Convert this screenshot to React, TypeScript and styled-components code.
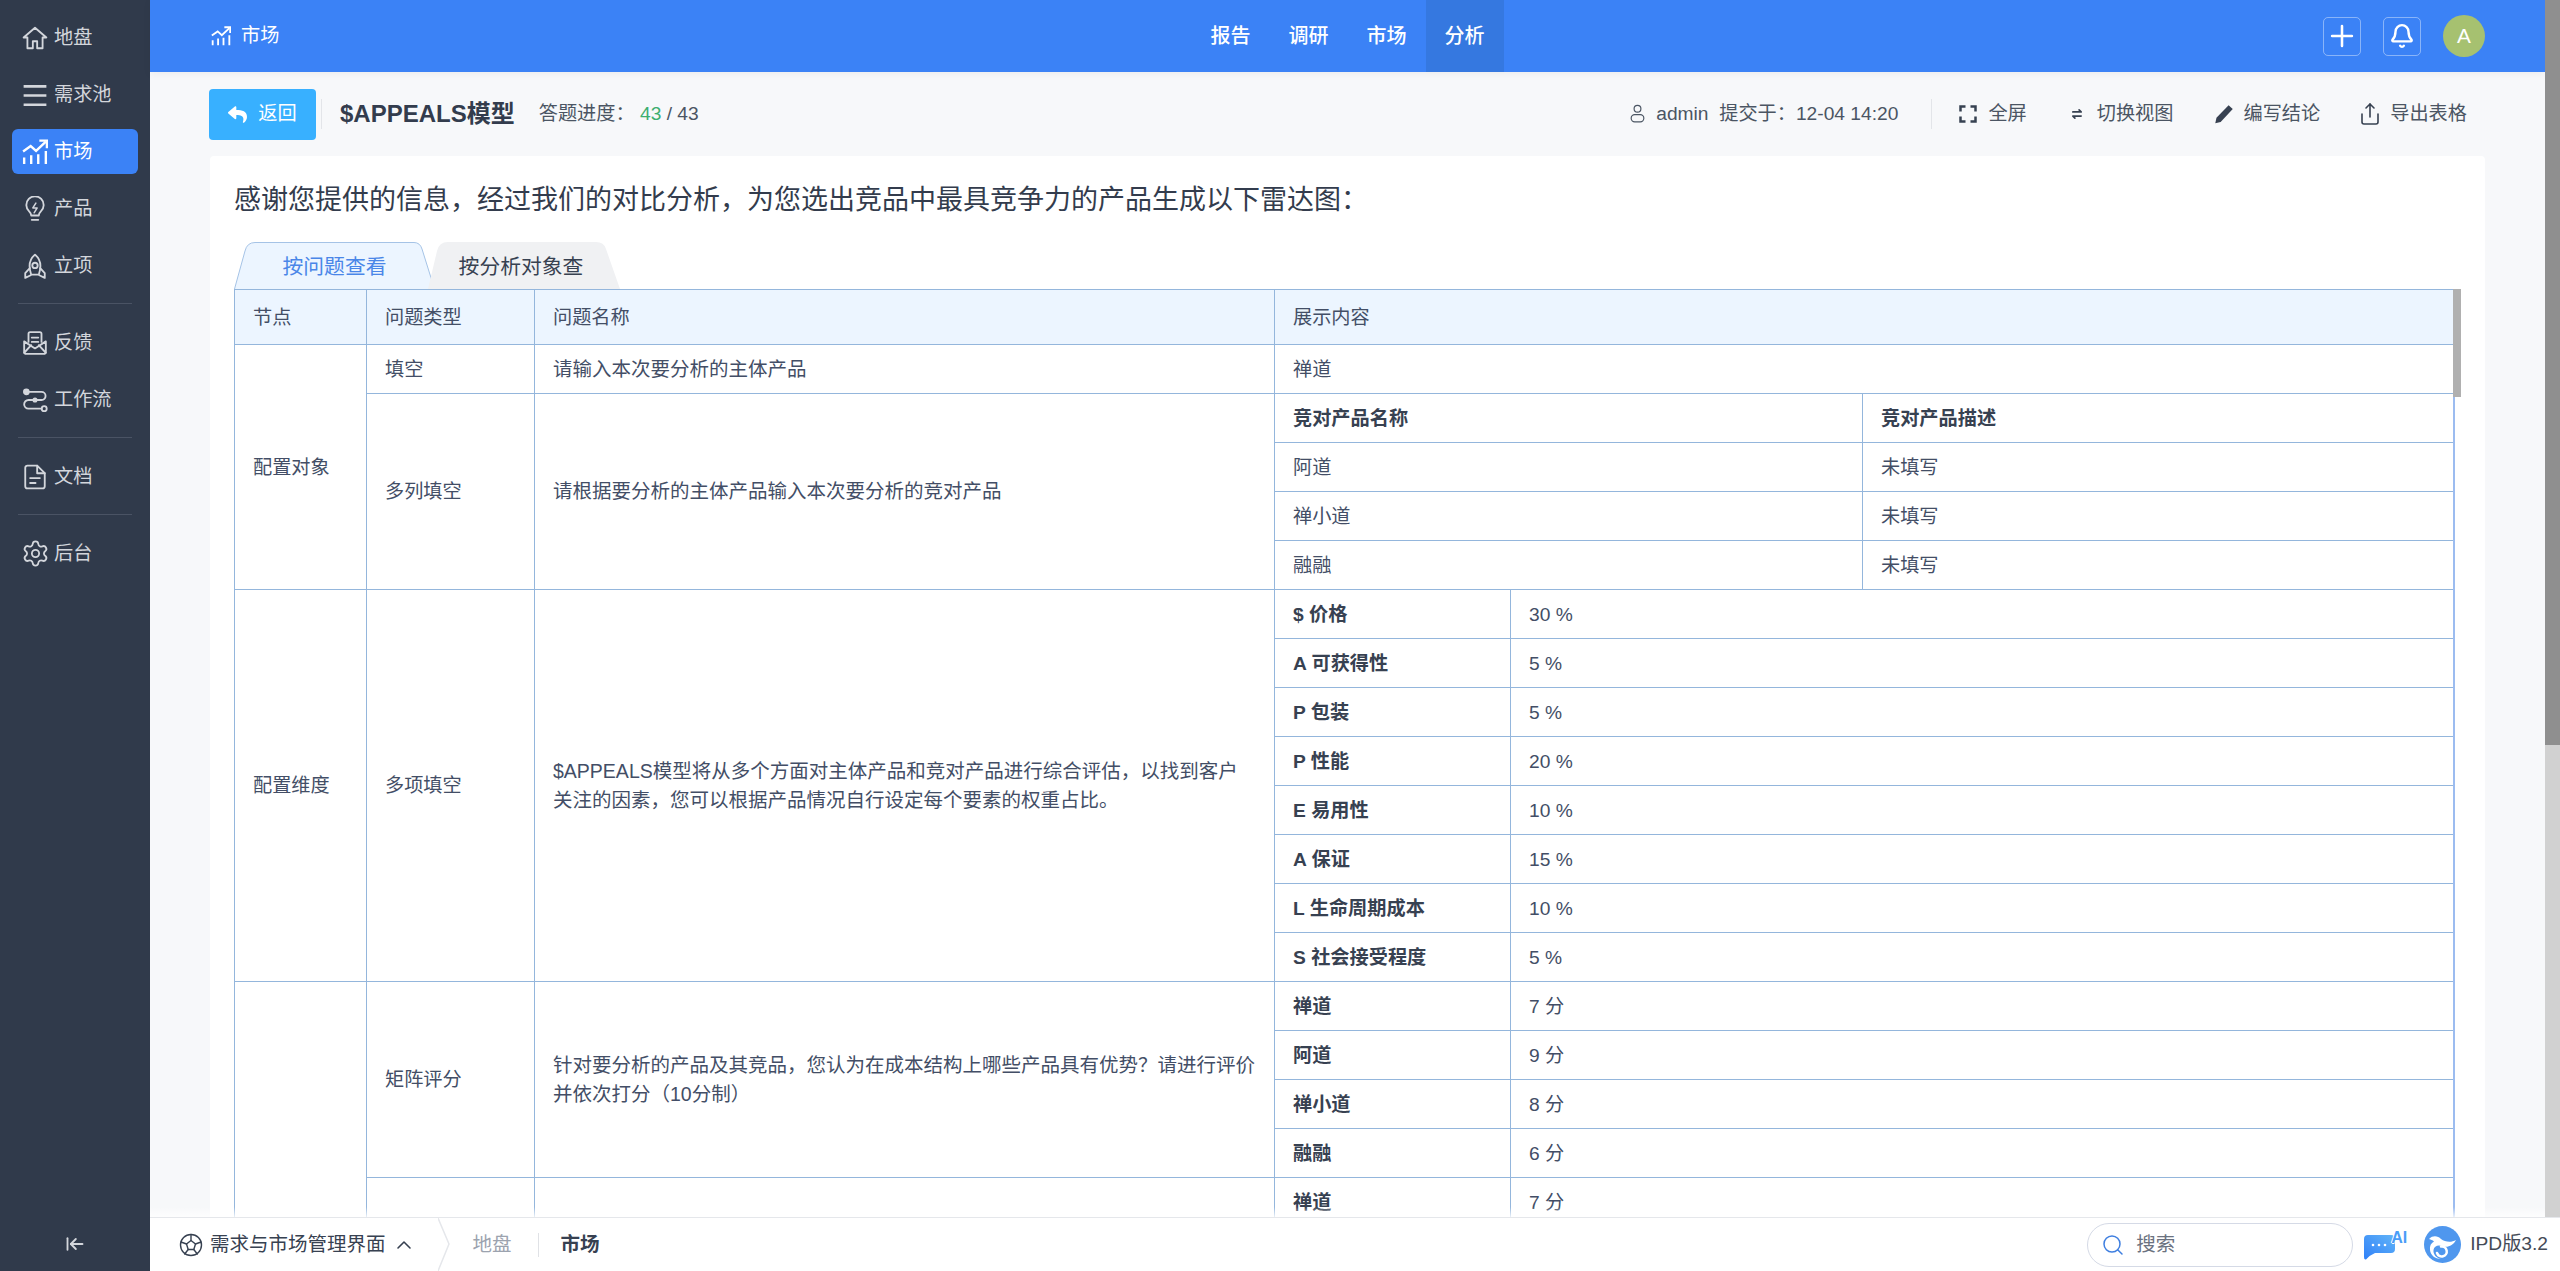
import React from 'react'
import styled, { createGlobalStyle } from 'styled-components'
import { ArrowLeftToLine, Bell, ChevronUp, Plus, Search, Settings, Share } from 'lucide-react'
import { FaReply } from 'react-icons/fa'

const GlobalStyle = createGlobalStyle`
  html, body {
    margin: 0;
    height: 100%;
    overflow: hidden;
  }
  body {
    font-family: "Liberation Sans", "Noto Sans CJK SC", sans-serif;
    font-size: 19.2px;
    line-height: 1.5;
    color: #374151;
  }
  #root {
    height: 100%;
  }
`

const Page = styled.div`
  display: flex;
  height: 100vh;
  background: #fff;
`

// 왼쪽 메뉴
const Sidebar = styled.aside`
  width: 150px;
  flex: none;
  display: flex;
  flex-direction: column;
  background: #303a4b;
  padding: 15px 12px 0;
  box-sizing: border-box;
`

const MenuItem = styled.a<{ $active?: boolean }>`
  display: flex;
  align-items: center;
  gap: 6px;
  height: 45px;
  flex: none;
  margin-bottom: 12px;
  padding: 2px 0 0 10px;
  box-sizing: border-box;
  border-radius: 6px;
  font-size: 19.2px;
  color: ${(p) => (p.$active ? '#fff' : '#d3d6dc')};
  background: ${(p) => (p.$active ? '#3b82f6' : 'transparent')};

  & > svg {
    width: 26px;
    height: 26px;
    flex: none;
    margin-top: -2px;
  }
`

const GearIcon = styled(Settings)`
  && {
    width: 29px;
    height: 29px;
    margin: -2px -1.5px 0;
  }
`

const MenuDivider = styled.div`
  height: 1px;
  flex: none;
  margin: 3px 6px 16px;
  background: #4a5364;
`

const Collapse = styled.button`
  margin-top: auto;
  height: 54px;
  border: 0;
  padding: 0;
  background: none;
  color: #d3d6dc;
  display: flex;
  align-items: center;
  justify-content: center;

  & > svg {
    width: 20px;
    height: 20px;
  }
`

const Right = styled.div`
  flex: 1;
  min-width: 0;
  display: flex;
  flex-direction: column;
`

const Viewport = styled.div`
  flex: 1;
  min-height: 0;
  display: flex;
`

const Scroller = styled.div`
  flex: 1;
  min-width: 0;
  display: flex;
  flex-direction: column;
  background: #f7f8fa;
`

const ScrollTrack = styled.div`
  width: 15px;
  flex: none;
  background: #d1d1d1;
`

const ScrollThumb = styled.div`
  height: 745px;
  background: #8f8f8f;
`

// 상단 바
const TopBar = styled.header`
  height: 72px;
  flex: none;
  display: grid;
  grid-template-columns: 1fr auto 1fr;
  align-items: stretch;
  background: #3b82f6;
  color: #fff;
  box-shadow: 0 2px 8px rgba(0, 0, 0, 0.05);
`

const TopTitle = styled.div`
  display: flex;
  align-items: center;
  gap: 10px;
  padding-left: 61px;
  font-size: 19.2px;

  & > svg {
    width: 20px;
    height: 20px;
  }
`

const Nav = styled.nav`
  display: flex;
`

const NavItem = styled.a<{ $active?: boolean }>`
  width: 78px;
  display: flex;
  align-items: center;
  justify-content: center;
  font-size: 20px;
  font-weight: 500;
  background: ${(p) => (p.$active ? '#3578e0' : 'transparent')};
`

const TopActions = styled.div`
  display: flex;
  align-items: center;
  justify-content: flex-end;
  gap: 22px;
  padding-right: 60px;
`

const SquareButton = styled.button`
  width: 38px;
  height: 39px;
  padding: 0;
  display: flex;
  align-items: center;
  justify-content: center;
  color: #fff;
  background: transparent;
  border: 1px solid rgba(255, 255, 255, 0.4);
  border-radius: 5px;

  & > svg {
    flex: none;
  }
`

const Avatar = styled.div`
  width: 42px;
  height: 42px;
  border-radius: 50%;
  background: #a6c170;
  display: flex;
  align-items: center;
  justify-content: center;
  font-size: 20.8px;
`

// 제목 줄
const ToolBar = styled.div`
  height: 84px;
  flex: none;
  display: flex;
  align-items: center;
  justify-content: space-between;
  padding: 0 78px 0 59px;
`

const ToolLeft = styled.div`
  display: flex;
  align-items: center;
`

const BackButton = styled.button`
  width: 107px;
  height: 51px;
  padding: 0;
  border: 0;
  border-radius: 4px;
  background: #38b0ff;
  color: #fff;
  font: inherit;
  display: flex;
  align-items: center;
  justify-content: center;
  gap: 11px;
  margin-right: 5px;

  & > svg {
    width: 19px;
    height: 19px;
  }
`

const VSep = styled.span`
  width: 1px;
  height: 30px;
  background: #e3e5e9;
`

const Title = styled.h1`
  margin: 0 24px 0 18px;
  font-size: 24px;
  font-weight: 700;
  color: #333c4d;
`

const Progress = styled.div`
  color: #4b5563;
`

const Done = styled.span`
  color: #3dae6f;
`

const ToolRight = styled.div`
  display: flex;
  align-items: center;
  color: #4b5563;
`

const Submitter = styled.div`
  display: flex;
  align-items: center;
  gap: 9px;
  margin-right: 33px;

  & > svg {
    width: 19px;
    height: 19px;
  }
`

const ToolAction = styled.a`
  display: flex;
  align-items: center;
  gap: 10px;
  margin-left: 40px;

  &:first-of-type {
    margin-left: 26px;
  }

  & > svg {
    width: 20px;
    height: 20px;
    flex: none;
    color: #374151;
  }
`

const ShareIcon = styled(Share)`
  && {
    width: 24px;
    height: 24px;
    margin: 0 -2px;
  }
`

// 본문 카드
const Card = styled.main`
  flex: 1;
  min-height: 0;
  margin: 0 60px;
  padding: 0 24px;
  background: #fff;
  border-radius: 4px 4px 0 0;
  display: flex;
  flex-direction: column;
  overflow: hidden;
`

const Lead = styled.p`
  margin: 0;
  height: 86px;
  flex: none;
  box-sizing: border-box;
  padding-top: 3px;
  display: flex;
  align-items: center;
  font-size: 27px;
  color: #333c4d;
`

const Tabs = styled.div`
  display: flex;
  height: 47px;
  flex: none;
`

const Tab = styled.a<{ $active?: boolean }>`
  position: relative;
  display: flex;
  align-items: center;
  justify-content: center;
  height: 47px;
  font-size: 20.8px;
  width: ${(p) => (p.$active ? '201px' : '192px')};
  margin-left: ${(p) => (p.$active ? '0' : '-7px')};
  padding: ${(p) => (p.$active ? '2px 0 0' : '2px 6px 0 0')};
  box-sizing: border-box;
  color: ${(p) => (p.$active ? '#4a86e8' : '#374151')};

  & > svg {
    position: absolute;
    inset: 0;
    width: 100%;
    height: 100%;
  }

  & > span {
    position: relative;
  }
`

const TableBox = styled.div`
  flex: 1;
  min-height: 0;
  overflow: hidden;
  position: relative;
  padding-right: 8px;
`

const TableThumb = styled.div`
  position: absolute;
  z-index: 1;
  top: 0;
  right: 0;
  width: 8px;
  height: 108px;
  background: #b0b0b0;
`

const Sheet = styled.table`
  width: 2219px;
  border-collapse: collapse;
  border-right: 2px solid #9cbcf0;
  table-layout: fixed;
  color: #434e66;
  font-size: 19.2px;
  line-height: 29px;
`

const Row = styled.tr<{ $head?: boolean }>`
  height: ${(p) => (p.$head ? '55px' : '49px')};
  background: ${(p) => (p.$head ? '#ecf5ff' : 'transparent')};
`

const Cell = styled.td<{ $bold?: boolean }>`
  box-sizing: border-box;
  padding: 0 18px;
  border: 1px solid #94b6dc;
  font-weight: ${(p) => (p.$bold ? 700 : 400)};
  color: ${(p) => (p.$bold ? '#374151' : 'inherit')};
`

const NameCell = styled(Cell)`
  font-size: 19.5px;
`

// 하단 바
const Footer = styled.footer`
  height: 54px;
  flex: none;
  box-sizing: border-box;
  border-top: 1px solid #e5e7eb;
  background: #fff;
  display: flex;
  align-items: center;
  position: relative;
  padding-left: 29px;
  padding-right: 12px;
  font-size: 19.5px;

  &::before {
    content: '';
    position: absolute;
    left: 0;
    right: 15px;
    top: -11px;
    height: 10px;
    background: linear-gradient(rgba(255, 255, 255, 0), rgba(255, 255, 255, 0.8));
  }
`

const System = styled.div`
  display: flex;
  align-items: center;
  gap: 7px;
  color: #374151;

  & > svg {
    width: 24px;
    height: 24px;
    flex: none;
  }
  & > svg:last-child {
    margin-left: -1px;
  }
`

const Crumbs = styled.div`
  display: flex;
  align-items: center;
  margin-left: 22px;
  height: 100%;
`

const Chevron = styled.svg`
  width: 12px;
  height: 53px;
  flex: none;
  margin-right: 23px;
`

const Crumb = styled.span<{ $current?: boolean }>`
  font-weight: ${(p) => (p.$current ? 700 : 400)};
  color: ${(p) => (p.$current ? '#374151' : '#9ca3af')};
`

const CrumbSep = styled.span`
  width: 1px;
  height: 24px;
  margin: 0 22px 0 26px;
  background: #e0e2e6;
`

const FooterRight = styled.div`
  margin-left: auto;
  display: flex;
  align-items: center;
`

const SearchBox = styled.div`
  width: 266px;
  height: 44px;
  box-sizing: border-box;
  border: 1.5px solid #d5dae6;
  border-radius: 22px;
  display: flex;
  align-items: center;
  gap: 11px;
  padding-left: 13px;
  color: #6b7280;

  & > svg {
    width: 24px;
    height: 24px;
    color: #3f7fe0;
  }
`

const AiBadge = styled.div`
  position: relative;
  width: 43px;
  height: 32px;
  margin-left: 11px;

  & > svg {
    position: absolute;
    left: 0;
    bottom: 1px;
    width: 31px;
    height: 25px;
  }
`

const AiText = styled.span`
  position: absolute;
  top: -3px;
  right: 0;
  font-size: 16px;
  font-weight: 700;
  color: #4a9df8;
  text-shadow: -1px 0 0 #fff, 0 1px 0 #fff;
`

const Logo = styled.svg`
  width: 37px;
  height: 37px;
  margin: 0 9px 0 17px;
`

const Version = styled.span`
  font-size: 19.2px;
  color: #444b57;
  white-space: nowrap;
`

const Ic = (props: React.SVGProps<SVGSVGElement>) => (
  <svg viewBox="0 0 24 24" fill="none" stroke="currentColor" strokeWidth="1.7" strokeLinecap="round" strokeLinejoin="round" {...props} />
)

const HomeIcon = () => (
  <Ic>
    <path d="M1.500 11.500 12 2.500l10.500 9H19V21.500h-5v-6.500h-4v6.500H5V11.500Z" />
  </Ic>
)
const ListIcon = () => (
  <Ic strokeWidth="2.400" strokeLinecap="butt">
    <path d="M1.500 4h21M1.500 12.500h21M1.500 21h21" />
  </Ic>
)
const MarketIcon = () => (
  <Ic strokeWidth="2.200" strokeLinecap="butt" strokeLinejoin="miter">
    <path d="M2 23v-6M8.500 23v-8M15 23v-9M22 23V11" />
    <path d="M1 11.500 8 6.500l5 4.500 9-8.500" />
    <path d="M16 1.500h7v7" />
  </Ic>
)
const BulbIcon = () => (
  <Ic>
    <path d="M8.500 18c0-1.500-.8-2.700-1.900-3.800A8 8 0 1 1 17.400 14.200c-1.100 1.100-1.900 2.300-1.900 3.800Z" />
    <path d="M9 22h6" />
    <path d="M12.800 6.500 10 11h4l-2.800 4.500" strokeWidth="1.400" />
  </Ic>
)
const RocketIcon = () => (
  <Ic>
    <path d="M12 1.500c3.500 3 5 6.500 5 10.500 0 3-.7 5.500-1.500 8h-7C7.700 17.500 7 15 7 12c0-4 1.500-7.500 5-10.500Z" />
    <circle cx="12" cy="11.500" r="2.500" />
    <path d="M7.200 14 3 18.500V23l5-2.500M16.800 14l4.200 4.500V23l-5-2.500" />
  </Ic>
)
const FeedbackIcon = () => (
  <Ic>
    <path d="M6 11V3.500A1.500 1.500 0 0 1 7.500 2h9A1.500 1.500 0 0 1 18 3.500V11" />
    <path d="M9 7h6M9 11h6" />
    <path d="M2 10.500V20a2 2 0 0 0 2 2h16a2 2 0 0 0 2-2v-9.500L12 17Z" />
    <path d="m2 21 6.500-7M22 21l-6.500-7" />
  </Ic>
)
const FlowIcon = () => (
  <Ic>
    <circle cx="4" cy="4.500" r="2.200" fill="currentColor" />
    <path d="M6 4.500h12a3.500 3.500 0 0 1 0 7.500H6a4 4 0 0 0 0 8h12" />
    <circle cx="20.500" cy="20" r="2.300" />
    <circle cx="12" cy="12" r="1.500" fill="currentColor" />
  </Ic>
)
const DocIcon = () => (
  <Ic>
    <path d="M14 1.500H5a2 2 0 0 0-2 2v17a2 2 0 0 0 2 2h14a2 2 0 0 0 2-2V8.500Z" />
    <path d="M14 1.500V8.500h7M7.500 13h9M7.500 17.500h5" />
  </Ic>
)
const UserIcon = () => (
  <Ic strokeWidth="1.500">
    <circle cx="12" cy="6" r="4.300" />
    <rect x="4" y="13.500" width="16" height="9" rx="4.500" />
  </Ic>
)
const FullIcon = () => (
  <Ic strokeWidth="3" strokeLinecap="butt" strokeLinejoin="miter">
    <path d="M3 9V3h6M15 3h6v6M21 15v6h-6M9 21H3v-6" />
  </Ic>
)
const SwapIcon = () => (
  <Ic strokeWidth="2">
    <path d="M7 9.500h10l-2.500-2.500M17 14.500H7l2.500 2.500" />
  </Ic>
)
const PenIcon = () => (
  <svg viewBox="0 0 24 24" fill="currentColor">
    <path d="M17.500 1.500 22.500 6 8 21.500 1.500 23 3 16.500Z" />
  </svg>
)
const WheelIcon = () => (
  <Ic strokeWidth="1.400">
    <circle cx="12" cy="12" r="10.500" />
    <path d="M12 7.500 16.500 11l-1.700 5.500H9.200L7.500 11Z" />
    <path d="M12 7.500V1.500M16.500 11 22 9M14.800 16.500l3.500 4.500M9.200 16.500 5.700 21M7.500 11 2 9" />
  </Ic>
)

type RowData = { label: string; value: string }

const dimensions: RowData[] = [
  { label: '$ 价格', value: '30 %' },
  { label: 'A 可获得性', value: '5 %' },
  { label: 'P 包装', value: '5 %' },
  { label: 'P 性能', value: '20 %' },
  { label: 'E 易用性', value: '10 %' },
  { label: 'A 保证', value: '15 %' },
  { label: 'L 生命周期成本', value: '10 %' },
  { label: 'S 社会接受程度', value: '5 %' },
]

const scores: RowData[] = [
  { label: '禅道', value: '7 分' },
  { label: '阿道', value: '9 分' },
  { label: '禅小道', value: '8 分' },
  { label: '融融', value: '6 分' },
]

const rivals = ['阿道', '禅小道', '融融']

const App = (): JSX.Element => {
  return (
    <Page>
      <GlobalStyle />
      <Sidebar>
        <MenuItem><HomeIcon />地盘</MenuItem>
        <MenuItem><ListIcon />需求池</MenuItem>
        <MenuItem $active><MarketIcon />市场</MenuItem>
        <MenuItem><BulbIcon />产品</MenuItem>
        <MenuItem><RocketIcon />立项</MenuItem>
        <MenuDivider />
        <MenuItem><FeedbackIcon />反馈</MenuItem>
        <MenuItem><FlowIcon />工作流</MenuItem>
        <MenuDivider />
        <MenuItem><DocIcon />文档</MenuItem>
        <MenuDivider />
        <MenuItem><GearIcon strokeWidth={1.5} />后台</MenuItem>
        <Collapse><ArrowLeftToLine strokeWidth={2.2} /></Collapse>
      </Sidebar>
      <Right>
        <Viewport>
          <Scroller>
            <TopBar>
              <TopTitle><MarketIcon />市场</TopTitle>
              <Nav>
                <NavItem>报告</NavItem>
                <NavItem>调研</NavItem>
                <NavItem>市场</NavItem>
                <NavItem $active>分析</NavItem>
              </Nav>
              <TopActions>
                <SquareButton><Plus size={34} strokeWidth={1.8} /></SquareButton>
                <SquareButton><Bell size={26} strokeWidth={2.2} /></SquareButton>
                <Avatar>A</Avatar>
              </TopActions>
            </TopBar>
            <ToolBar>
              <ToolLeft>
                <BackButton><FaReply />返回</BackButton>
                <VSep />
                <Title>$APPEALS模型</Title>
                <Progress>答题进度： <Done>43</Done> / 43</Progress>
              </ToolLeft>
              <ToolRight>
                <Submitter><UserIcon />admin&nbsp; 提交于：12-04 14:20</Submitter>
                <VSep />
                <ToolAction><FullIcon />全屏</ToolAction>
                <ToolAction><SwapIcon />切换视图</ToolAction>
                <ToolAction><PenIcon />编写结论</ToolAction>
                <ToolAction><ShareIcon strokeWidth={1.6} />导出表格</ToolAction>
              </ToolRight>
            </ToolBar>
            <Card>
              <Lead>感谢您提供的信息，经过我们的对比分析，为您选出竞品中最具竞争力的产品生成以下雷达图：</Lead>
              <Tabs>
                <Tab $active>
                  <svg viewBox="0 0 201 47" preserveAspectRatio="none">
                    <path d="M.5 47 11 9Q13 .5 21 .5H180Q186 .5 188 7L200.500 47" fill="#ecf5ff" stroke="#a5c3e6" />
                  </svg>
                  <span>按问题查看</span>
                </Tab>
                <Tab>
                  <svg viewBox="0 0 192 47" preserveAspectRatio="none">
                    <path d="M0 47 9 9Q11 0 20 0H168Q176 0 178 7L192 47Z" fill="#f0f1f3" />
                  </svg>
                  <span>按分析对象查</span>
                </Tab>
              </Tabs>
              <TableBox>
                <TableThumb />
                <Sheet>
                  <colgroup>
                    <col width="132" />
                    <col width="168" />
                    <col width="740" />
                    <col width="236" />
                    <col width="352" />
                    <col width="591" />
                  </colgroup>
                  <tbody>
                    <Row $head>
                      <Cell>节点</Cell>
                      <Cell>问题类型</Cell>
                      <Cell>问题名称</Cell>
                      <Cell colSpan={3}>展示内容</Cell>
                    </Row>
                    <Row>
                      <Cell rowSpan={5}>配置对象</Cell>
                      <Cell>填空</Cell>
                      <NameCell>请输入本次要分析的主体产品</NameCell>
                      <Cell colSpan={3}>禅道</Cell>
                    </Row>
                    <Row>
                      <Cell rowSpan={4}>多列填空</Cell>
                      <NameCell rowSpan={4}>请根据要分析的主体产品输入本次要分析的竞对产品</NameCell>
                      <Cell $bold colSpan={2}>竞对产品名称</Cell>
                      <Cell $bold>竞对产品描述</Cell>
                    </Row>
                    {rivals.map((name) => (
                      <Row key={name}>
                        <Cell colSpan={2}>{name}</Cell>
                        <Cell>未填写</Cell>
                      </Row>
                    ))}
                    {dimensions.map((item, i) => (
                      <Row key={item.label}>
                        {i === 0 && (
                          <>
                            <Cell rowSpan={8}>配置维度</Cell>
                            <Cell rowSpan={8}>多项填空</Cell>
                            <NameCell rowSpan={8}>
                              $APPEALS模型将从多个方面对主体产品和竞对产品进行综合评估，以找到客户关注的因素，您可以根据产品情况自行设定每个要素的权重占比。
                            </NameCell>
                          </>
                        )}
                        <Cell $bold>{item.label}</Cell>
                        <Cell colSpan={2}>{item.value}</Cell>
                      </Row>
                    ))}
                    {scores.map((item, i) => (
                      <Row key={item.label}>
                        {i === 0 && (
                          <>
                            <Cell rowSpan={5} />
                            <Cell rowSpan={4}>矩阵评分</Cell>
                            <NameCell rowSpan={4}>
                              针对要分析的产品及其竞品，您认为在成本结构上哪些产品具有优势？请进行评价并依次打分（10分制）
                            </NameCell>
                          </>
                        )}
                        <Cell $bold>{item.label}</Cell>
                        <Cell colSpan={2}>{item.value}</Cell>
                      </Row>
                    ))}
                    <Row>
                      <Cell />
                      <Cell />
                      <Cell $bold>禅道</Cell>
                      <Cell colSpan={2}>7 分</Cell>
                    </Row>
                  </tbody>
                </Sheet>
              </TableBox>
            </Card>
          </Scroller>
          <ScrollTrack><ScrollThumb /></ScrollTrack>
        </Viewport>
        <Footer>
          <System><WheelIcon />需求与市场管理界面<ChevronUp strokeWidth={1.6} /></System>
          <Crumbs>
            <Chevron viewBox="0 0 12 53">
              <path d="M0 0 11 26 0 53" fill="none" stroke="#e5e7eb" strokeWidth="1.500" />
            </Chevron>
            <Crumb>地盘</Crumb>
            <CrumbSep />
            <Crumb $current>市场</Crumb>
          </Crumbs>
          <FooterRight>
            <SearchBox><Search strokeWidth={1.5} />搜索</SearchBox>
            <AiBadge>
              <svg viewBox="0 0 31 25">
                <defs>
                  <linearGradient id="aiFill" x1="0" y1="1" x2="1" y2="0">
                    <stop offset="0" stopColor="#2f80f8" />
                    <stop offset="1" stopColor="#62b4f8" />
                  </linearGradient>
                </defs>
                <path d="M4 0H27a4 4 0 0 1 4 4V14a4 4 0 0 1-4 4H11Q6 20 2 24.500Q0 25 0 22V4a4 4 0 0 1 4-4Z" fill="url(#aiFill)" />
                <circle cx="9" cy="10" r="1.300" fill="#fff" />
                <circle cx="15" cy="10" r="1.300" fill="#fff" />
                <circle cx="21" cy="10" r="1.300" fill="#fff" />
              </svg>
              <AiText>AI</AiText>
            </AiBadge>
            <Logo viewBox="0 0 37 37">
              <circle cx="18.500" cy="18.500" r="18.500" fill="#4f97ee" />
              <path d="M5 13C9 9 14 10 17 13 21 16 27 17 32 14 29 20 23 22 18 20 14 18.500 10 20 9.500 24 9 28 12 32 17 33 11 33 6.500 29 6 24 5.500 20 7 17 10 15.500 8.500 14 7 13.500 5 13Z" fill="#fff" />
              <path d="M13 27a5 5 0 1 0 4-6.500" fill="none" stroke="#fff" strokeWidth="2.500" strokeLinecap="round" />
            </Logo>
            <Version>IPD版3.2</Version>
          </FooterRight>
        </Footer>
      </Right>
    </Page>
  )
}

export default App
